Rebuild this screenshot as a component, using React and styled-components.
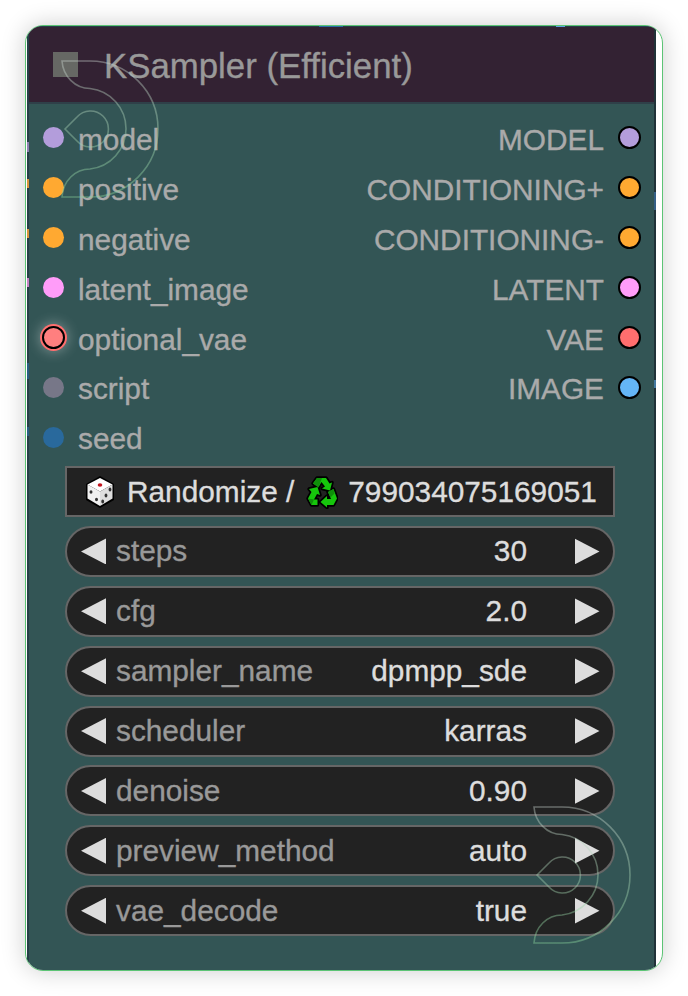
import React from 'react'
import styled, { createGlobalStyle } from 'styled-components'

const GlobalStyle = createGlobalStyle`
  * {
    box-sizing: border-box;
  }
  body {
    margin: 0;
    background-color: #fff;
    font-family: 'Liberation Sans', Arial, sans-serif;
    font-size: 29.8px;
    -webkit-text-stroke: 0.35px currentColor;
  }
`

const Page = styled.main`
  height: 996px;
  padding: 25px;
  overflow: hidden;
`

const Frame = styled.div`
  position: relative;
  width: 638px;
  height: 946px;
  padding: 0 6px 0 1px;
  border: 1px solid #5cc475;
  border-radius: 18px;
  background-color: #fff;
  box-shadow: 0 0 25px rgba(0, 0, 0, 0.2);
  overflow: hidden;
`

const Node = styled.section`
  height: 100%;
  border: solid #263f48;
  border-width: 1px 2px 0;
  border-right-color: #203238;
  background-color: #335555;
`

const Header = styled.header`
  display: flex;
  align-items: center;
  gap: 26px;
  height: 77px;
  padding-left: 24px;
  border-bottom: 2px solid #2f4049;
  background-color: #332233;
`

const Collapse = styled.span`
  width: 25px;
  height: 25px;
  background-color: #666864;
`

const Title = styled.h1`
  margin: 0;
  padding-top: 2px;
  font-size: 34.8px;
  font-weight: 400;
  line-height: 40px;
  color: #999;
`

const Slots = styled.div`
  display: flex;
  justify-content: space-between;
  height: 362px;
  padding: 9px 13px 0 14px;
`

const SlotColumn = styled.div`
  display: flex;
  flex-direction: column;
`

const Slot = styled.div`
  display: flex;
  flex: none;
  flex-direction: ${({ output }) => (output ? 'row-reverse' : 'row')};
  align-items: center;
  gap: 14px;
  height: 49.9px;
  color: #aaa;
`

const SlotName = styled.span`
  padding-top: 4px;
  line-height: 36px;
`

const Dot = styled.span`
  flex: none;
  width: ${({ outlined }) => (outlined ? 23 : 21)}px;
  height: ${({ outlined }) => (outlined ? 23 : 21)}px;
  margin: ${({ active }) => (active ? '0 -1px' : 0)};
  border: ${({ outlined }) => (outlined ? '2.5px solid #000' : 'none')};
  border-radius: 50%;
  background-color: ${({ color }) => color};
  box-shadow: ${({ active }) => active && '0 0 0 2px #ff6e6e, 0 0 14px 2px rgba(255, 255, 255, 0.4)'};
`

const Widgets = styled.div`
  display: flex;
  flex-direction: column;
  gap: 8.9px;
  padding: 0 39px 0 36px;
`

const SeedButton = styled.div`
  display: flex;
  align-items: center;
  height: 51px;
  padding-left: 18px;
  border: 2px solid #666;
  background-color: #222;
  color: #ddd;
  white-space: pre;

  svg {
    flex: none;
  }
`

const SeedText = styled.span`
  margin: 0 ${({ after }) => after || 0}px 0 ${({ before }) => before}px;
  line-height: 36px;
`

const Widget = styled.div`
  display: flex;
  align-items: center;
  height: 51px;
  padding: 0 13.5px 0 14px;
  border: 2px solid #666;
  border-radius: 26px;
  background-color: #222;
  line-height: 36px;
`

const WidgetName = styled.span`
  margin-left: 10px;
  color: #999;
`

const WidgetValue = styled.span`
  margin-left: auto;
  margin-right: 47.5px;
  color: #ddd;
`

const Arrow = styled.span`
  width: 25px;
  height: 26px;
  background-color: #ddd;
  clip-path: ${({ right }) => (right ? 'polygon(0 0, 100% 50%, 0 100%)' : 'polygon(100% 0, 100% 100%, 0 50%)')};
`

// ends of the links that pass behind the node
const LinkEnd = styled.i`
  position: absolute;
  left: ${({ x }) => x}px;
  top: ${({ y }) => y}px;
  width: ${({ w }) => w}px;
  height: ${({ h }) => h}px;
  background-color: ${({ color }) => color};
`

const Mark = styled.svg`
  position: absolute;
  left: ${({ x }) => x}px;
  top: ${({ y }) => y}px;
  fill: none;
  stroke-width: 1.6;
  pointer-events: none;
`

const inputs = [
  { name: 'model', color: '#b39ddb' },
  { name: 'positive', color: '#ffa931' },
  { name: 'negative', color: '#ffa931' },
  { name: 'latent_image', color: '#ff9cf9' },
  { name: 'optional_vae', color: '#ff7f7f', active: true },
  { name: 'script', color: '#777788' },
  { name: 'seed', color: '#29699c' },
]

const outputs = [
  { name: 'MODEL', color: '#b39ddb' },
  { name: 'CONDITIONING+', color: '#ffa931' },
  { name: 'CONDITIONING-', color: '#ffa931' },
  { name: 'LATENT', color: '#ff9cf9' },
  { name: 'VAE', color: '#ff6e6e' },
  { name: 'IMAGE', color: '#64b5f6' },
]

const widgets = [
  ['steps', '30'],
  ['cfg', '2.0'],
  ['sampler_name', 'dpmpp_sde'],
  ['scheduler', 'karras'],
  ['denoise', '0.90'],
  ['preview_method', 'auto'],
  ['vae_decode', 'true'],
]

const links = [
  { x: 293, y: 0, w: 24, h: 1, color: '#2670a8' },
  { x: 530, y: 0, w: 9, h: 1, color: '#5aa5e0' },
  { x: 1, y: 116, w: 2, h: 10, color: '#8d7fb0' },
  { x: 1, y: 153, w: 2, h: 9, color: '#d8953a' },
  { x: 1, y: 203, w: 2, h: 9, color: '#d8953a' },
  { x: 1, y: 252, w: 2, h: 9, color: '#c583c5' },
  { x: 1, y: 337, w: 2, h: 16, color: '#285e82' },
  { x: 1, y: 401, w: 2, h: 9, color: '#285e82' },
  { x: 628, y: 166, w: 2, h: 18, color: '#345f86' },
  { x: 628, y: 354, w: 2, h: 8, color: '#4378a0' },
]

const Dice = () => (
  <svg width='30' height='34' viewBox='0 0 30 34'>
    <path d='M15 1 29 9v16L15 33 1 25V9z' fill='#000' />
    <path d='M15 3 27.5 9.5 15 16.5 2.5 9.5z' fill='#fff' />
    <path d='M2.5 9.5 15 16.5V31L2.5 23.5z' fill='#f1f1f1' />
    <path d='M27.5 9.5 15 16.5V31l12.5-7.5z' fill='#dedede' />
    <ellipse cx='15' cy='10' rx='2.3' ry='1.8' fill='#c3131d' />
    <g fill='#333'>
      <ellipse cx='6' cy='17' rx='1.5' ry='1.8' />
      <ellipse cx='11.5' cy='24.5' rx='1.5' ry='1.8' />
      <ellipse cx='25' cy='14.5' rx='1.4' ry='1.9' />
      <ellipse cx='21' cy='20.5' rx='1.4' ry='1.9' />
      <ellipse cx='17.7' cy='26.5' rx='1.4' ry='1.9' />
    </g>
  </svg>
)

const Recycle = () => (
  <svg width='32' height='34' viewBox='0 0 32 34'>
    <g stroke='#000' strokeWidth='3.5' strokeLinejoin='round' fill='#16c60c'>
      <path d='M11 3h9l3.5 5.5 2.5-1-2 8-8-2 3-2-3.5-4.5-3 5L7 8.5z' />
      <path d='m3 14 8.5-2 2.5 8-3-1-3 5.5h3.5V30H5.5L2 23.5 5.5 17z' />
      <path d='m22 17 5.5-3 3.5 9.5L27.5 30H21v2.5L14.5 27l6.5-6v3h4z' />
    </g>
    <g fill='#16c60c'>
      <path d='M11 3h9l3.5 5.5 2.5-1-2 8-8-2 3-2-3.5-4.5-3 5L7 8.5z' />
      <path d='m3 14 8.5-2 2.5 8-3-1-3 5.5h3.5V30H5.5L2 23.5 5.5 17z' />
      <path d='m22 17 5.5-3 3.5 9.5L27.5 30H21v2.5L14.5 27l6.5-6v3h4z' />
    </g>
    <path d='M11 3h5l-3.5 9.5L7 8.5zM2 23.5l6 1L5.5 30zM22 17l5.5-3 1 4.5-4 4z' fill='#0f8f0a' />
  </svg>
)

const Watermark = ({ id, x, y }) => (
  <Mark x={x} y={y} width='99' height='138' viewBox='0 0 99 138'>
    <defs>
      <linearGradient id={id} x1='0' y1='0' x2='0' y2='138' gradientUnits='userSpaceOnUse'>
        <stop offset='0' stopColor='#c8d2cd' stopOpacity='0.42' />
        <stop offset='1' stopColor='#8ad69c' stopOpacity='0.42' />
      </linearGradient>
    </defs>
    <g stroke={`url(#${id})`}>
      <path d='M1 1H29A68 68 0 0 1 29 137H1C2 121 14 109 29 109A40.5 40.5 0 0 0 29 28.5C14 28.5 2 16 1 1z' />
      <path d='M4 69 16 57A18 18 0 1 1 16 81z' />
    </g>
  </Mark>
)

const App = () => {
  return (
    <Page>
      <GlobalStyle />
      <Frame>
        <Node>
          <Header>
            <Collapse />
            <Title>KSampler (Efficient)</Title>
          </Header>
          <Slots>
            <SlotColumn>
              {inputs.map(({ name, color, active }) => (
                <Slot key={name}>
                  <Dot color={color} active={active} outlined={active} />
                  <SlotName>{name}</SlotName>
                </Slot>
              ))}
            </SlotColumn>
            <SlotColumn>
              {outputs.map(({ name, color }) => (
                <Slot key={name} output>
                  <Dot color={color} outlined />
                  <SlotName>{name}</SlotName>
                </Slot>
              ))}
            </SlotColumn>
          </Slots>
          <Widgets>
            <SeedButton>
              <Dice />
              <SeedText before={12} after={12}>Randomize /</SeedText>
              <Recycle />
              <SeedText before={10}>799034075169051</SeedText>
            </SeedButton>
            {widgets.map(([name, value]) => (
              <Widget key={name}>
                <Arrow />
                <WidgetName>{name}</WidgetName>
                <WidgetValue>{value}</WidgetValue>
                <Arrow right />
              </Widget>
            ))}
          </Widgets>
        </Node>
        {links.map((link) => (
          <LinkEnd key={`${link.x}-${link.y}`} {...link} />
        ))}
        <Watermark id='markTop' x={35} y={34} />
        <Watermark id='markBottom' x={507} y={780} />
      </Frame>
    </Page>
  )
}

export default App
